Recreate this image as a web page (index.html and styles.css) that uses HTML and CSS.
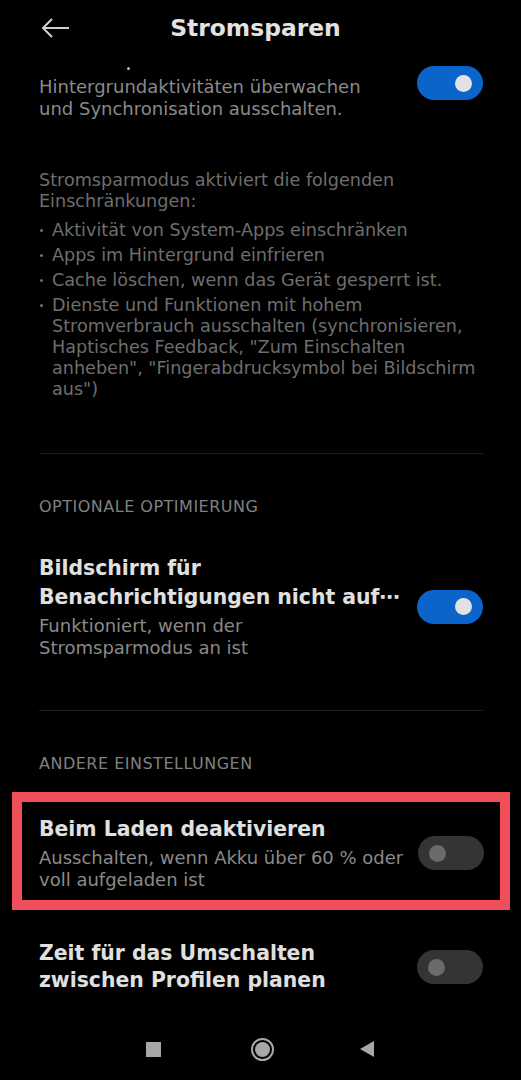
FILE: index.html
```html
<!DOCTYPE html>
<html lang="de">
<head>
<meta charset="utf-8">
<link rel="stylesheet" href="styles.css">
</head>
<body>
<div class="screen">
  <header class="header">
    <svg class="back" width="30" height="22" viewBox="0 0 30 22"><path d="M28 11H2M11 2L2 11l9 9" fill="none" stroke="#d0d0d0" stroke-width="2"/></svg>
    <h1 class="title">Stromsparen</h1>
  </header>

  <div class="item item-top">
    <div class="text">
      <div class="dot-line"><span class="dot"></span></div>
      <div class="sub">Hintergrundaktivitäten überwachen<br>und Synchronisation ausschalten.</div>
    </div>
    <div class="toggle on"><span class="knob"></span></div>
  </div>

  <div class="desc">
    <p class="desc-intro">Stromsparmodus aktiviert die folgenden<br>Einschränkungen:</p>
    <ul class="desc-list">
      <li>Aktivität von System-Apps einschränken</li>
      <li>Apps im Hintergrund einfrieren</li>
      <li>Cache löschen, wenn das Gerät gesperrt ist.</li>
      <li>Dienste und Funktionen mit hohem<br>Stromverbrauch ausschalten (synchronisieren,<br>Haptisches Feedback, "Zum Einschalten<br>anheben", "Fingerabdrucksymbol bei Bildschirm<br>aus")</li>
    </ul>
  </div>

  <div class="divider"></div>
  <div class="section">OPTIONALE OPTIMIERUNG</div>

  <div class="item item-opt">
    <div class="text">
      <div class="name">Bildschirm für<br>Benachrichtigungen nicht auf⋯</div>
      <div class="sub">Funktioniert, wenn der<br>Stromsparmodus an ist</div>
    </div>
    <div class="toggle on"><span class="knob"></span></div>
  </div>

  <div class="divider div2"></div>
  <div class="section">ANDERE EINSTELLUNGEN</div>

  <div class="highlight">
    <div class="item item-charge">
      <div class="text">
        <div class="name">Beim Laden deaktivieren</div>
        <div class="sub">Ausschalten, wenn Akku über 60 % oder<br>voll aufgeladen ist</div>
      </div>
      <div class="toggle off"><span class="knob"></span></div>
    </div>
  </div>

  <div class="item item-sched">
    <div class="text">
      <div class="name">Zeit für das Umschalten<br>zwischen Profilen planen</div>
    </div>
    <div class="toggle off"><span class="knob"></span></div>
  </div>

  <nav class="navbar">
    <span class="nav-square"></span>
    <span class="nav-home"></span>
    <svg class="nav-back" width="16" height="18" viewBox="0 0 16 18"><path d="M15 1V17L1 9Z" fill="#a8a8a8"/></svg>
  </nav>
</div>
</body>
</html>
```

FILE: styles.css
```css
* { box-sizing: border-box; }
html, body { margin: 0; padding: 0; background: #000; }
body { font-family: "DejaVu Sans", "Noto Sans", sans-serif; color: #e6e6e6; }
.screen { width: 521px; height: 1080px; background: #000; display: flex; flex-direction: column; }

.header { height: 56px; display: grid; grid-template-columns: 1fr auto 1fr; align-items: center; padding: 0 51px 0 41px; }
.back { display: block; }
.title { grid-column: 2; margin: 0; font-size: 23.4px; font-weight: 700; color: #e2e2e2; }

.item { display: flex; align-items: center; justify-content: space-between; padding: 0 38px 0 39px; }
.text { flex: 1; min-width: 0; }
.name { font-size: 20.4px; font-weight: 700; line-height: 29px; color: #e0e0e0; }
.sub { font-size: 18px; line-height: 22px; color: #8a8a8a; }
.name + .sub { margin-top: 3px; }

.item-top { align-items: flex-start; }
.item-top .toggle { margin-top: 10px; }
.dot-line { height: 20px; position: relative; }
.dot { position: absolute; left: 88px; top: 11px; width: 3px; height: 3px; background: #bbb; border-radius: 50%; }

.toggle { width: 66px; height: 34px; border-radius: 17px; flex: none; display: flex; align-items: center; padding: 0 11px; }
.toggle .knob { width: 17px; height: 17px; border-radius: 50%; }
.toggle.on { background: #0a64c9; justify-content: flex-end; }
.toggle.on .knob { background: #e2e2e2; }
.toggle.off { background: #343434; justify-content: flex-start; }
.toggle.off .knob { background: #6b6b6b; }

.desc { padding: 50px 30px 0 39px; color: #6e6e6e; font-size: 17.6px; line-height: 21px; }
.desc-intro { margin: 0 0 8px; }
.desc-list { list-style: none; margin: 0; padding: 0; }
.desc-list li { position: relative; padding-left: 13px; margin-bottom: 4px; }
.desc-list li::before { content: ""; position: absolute; left: 1px; top: 9px; width: 3px; height: 3px; background: #707070; border-radius: 50%; }

.divider { height: 1px; background: #1e1e1e; margin: 49px 38px 0 39px; }
.div2 { margin-top: 51px; }
.section { padding: 43px 39px 0; font-size: 16px; font-weight: 400; color: #808080; line-height: 20px; letter-spacing: 0.5px; }

.item-opt { margin-top: 37px; }

.highlight { margin: 18px 11px 0 12px; border: 10px solid #f04e58; padding: 13px 16px 9px 17px; }
.highlight .item { padding: 0; }

.item-sched { margin-top: 30px; }
.item-sched .name { line-height: 27px; }

.navbar { margin-top: auto; height: 58px; display: flex; align-items: center; justify-content: center; padding-bottom: 4px; }
.nav-square { width: 15px; height: 15px; background: #a8a8a8; }
.nav-home { width: 23px; height: 23px; border-radius: 50%; border: 2px solid #a8a8a8; margin: 0 85px 0 90px; position: relative; }
.nav-home::after { content: ""; position: absolute; inset: 2px; border-radius: 50%; background: #a8a8a8; }
.nav-back { display: block; }
```
